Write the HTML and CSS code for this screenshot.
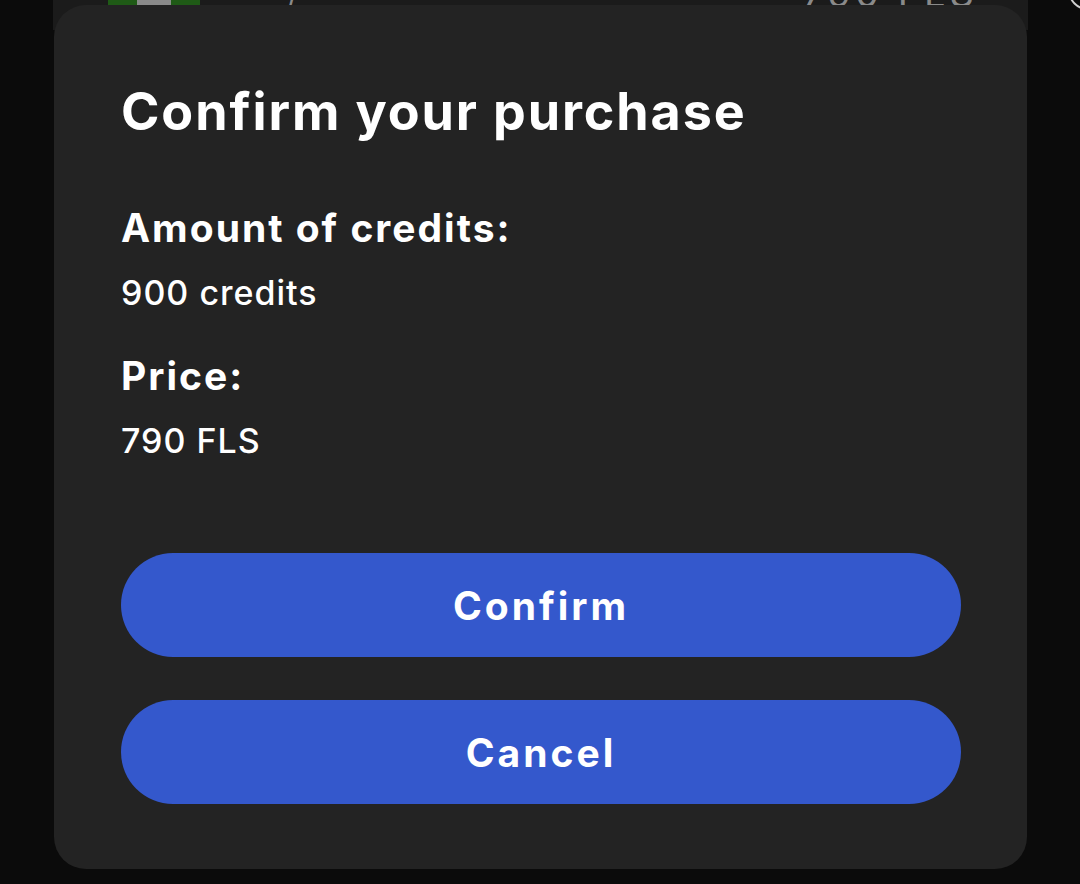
FILE: index.html
```html
<!DOCTYPE html>
<html lang="en">
<head>
<meta charset="utf-8">
<title>Confirm your purchase</title>
<link rel="stylesheet" href="styles.css">
</head>
<body>
<div class="screen">
  <div class="bg-list">
    <div class="bg-row">
      <div class="thumb"><div class="thumb-inner"></div></div>
      <div class="bg-name">/</div>
      <div class="bg-price">790 FLS</div>
    </div>
  </div>
  <div class="side-ring"></div>

  <div class="dialog" role="dialog">
    <h1 class="title">Confirm your purchase</h1>
    <div class="field">
      <div class="label">Amount of credits:</div>
      <div class="value">900 credits</div>
    </div>
    <div class="field">
      <div class="label">Price:</div>
      <div class="value">790 FLS</div>
    </div>
    <div class="actions">
      <button class="btn">Confirm</button>
      <button class="btn">Cancel</button>
    </div>
  </div>
</div>
</body>
</html>
```

FILE: styles.css
```css
* { box-sizing: border-box; }
html, body {
  margin: 0;
  padding: 0;
  background: #0b0b0b;
  width: 1080px;
  height: 884px;
  overflow: hidden;
  font-family: "Inter", "Noto Sans", sans-serif;
  color: #ffffff;
}
.screen {
  position: relative;
  width: 1080px;
  height: 884px;
}
.bg-list {
  margin-left: 53px;
  width: 975px;
  height: 30px;
  background: #1b1b1b;
  overflow: hidden;
}
.bg-row {
  display: flex;
  align-items: flex-end;
  height: 30px;
  margin-top: -22px;
  padding-left: 55px;
}
.thumb {
  width: 92px;
  height: 30px;
  background: #1f5a16;
  display: flex;
  justify-content: center;
}
.thumb-inner {
  width: 34px;
  height: 30px;
  background: #8a8a8a;
}
.bg-name {
  margin-left: 88px;
  color: #8a8a8a;
  font-size: 30px;
  line-height: 30px;
}
.bg-price {
  margin-left: auto;
  margin-right: 50px;
  color: #8a8a8a;
  font-size: 38px;
  line-height: 30px;
  letter-spacing: 4px;
}
.side-ring {
  position: absolute;
  left: 1068px;
  top: -30px;
  width: 40px;
  height: 40px;
  border: 2px solid #cfcfcf;
  border-radius: 50%;
}
.dialog {
  position: absolute;
  left: 54px;
  top: 5px;
  width: 973px;
  height: 864px;
  background: #232323;
  border-radius: 32px;
  padding: 77px 67px 0 67px;
  display: flex;
  flex-direction: column;
}
.title {
  margin: 0;
  font-size: 52px;
  font-weight: 700;
  line-height: 60px;
  letter-spacing: 1.9px;
}
.field {
  display: flex;
  flex-direction: column;
}
.label {
  font-size: 39px;
  font-weight: 700;
  line-height: 48px;
  margin-top: 62px;
  letter-spacing: 2px;
}
.field + .field .label {
  margin-top: 39px;
}
.value {
  font-size: 34px;
  font-weight: 500;
  line-height: 40px;
  margin-top: 21px;
  letter-spacing: 1px;
}
.actions {
  margin-top: 92px;
  display: flex;
  flex-direction: column;
  gap: 43px;
}
.btn {
  width: 840px;
  height: 104px;
  border: none;
  border-radius: 52px;
  background: #3458cc;
  color: #ffffff;
  font-family: inherit;
  font-size: 39px;
  font-weight: 700;
  letter-spacing: 3px;
  padding: 0;
}
```
